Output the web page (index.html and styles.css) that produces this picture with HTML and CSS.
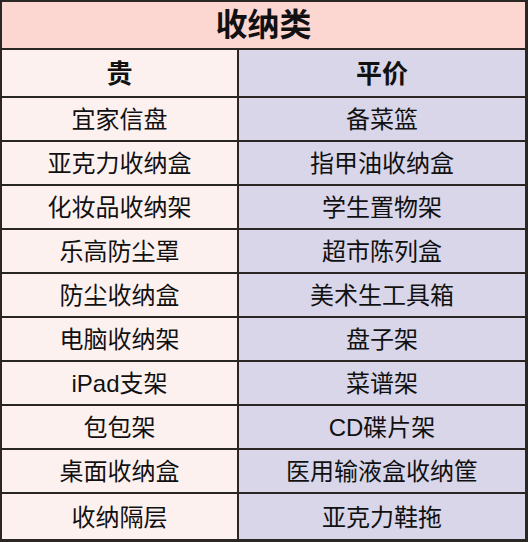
FILE: index.html
```html
<!DOCTYPE html>
<html lang="zh">
<head>
<meta charset="utf-8">
<title>收纳类</title>
<link rel="stylesheet" href="styles.css">
</head>
<body>
<div class="sheet">
  <div class="cell title">收纳类</div>
  <div class="cell head pricey">贵</div>
  <div class="cell head cheap">平价</div>
  <div class="cell pricey">宜家信盘</div>
  <div class="cell cheap">备菜篮</div>
  <div class="cell pricey">亚克力收纳盒</div>
  <div class="cell cheap">指甲油收纳盒</div>
  <div class="cell pricey">化妆品收纳架</div>
  <div class="cell cheap">学生置物架</div>
  <div class="cell pricey">乐高防尘罩</div>
  <div class="cell cheap">超市陈列盒</div>
  <div class="cell pricey">防尘收纳盒</div>
  <div class="cell cheap">美术生工具箱</div>
  <div class="cell pricey">电脑收纳架</div>
  <div class="cell cheap">盘子架</div>
  <div class="cell pricey">iPad支架</div>
  <div class="cell cheap">菜谱架</div>
  <div class="cell pricey">包包架</div>
  <div class="cell cheap">CD碟片架</div>
  <div class="cell pricey">桌面收纳盒</div>
  <div class="cell cheap">医用输液盒收纳筐</div>
  <div class="cell pricey">收纳隔层</div>
  <div class="cell cheap">亚克力鞋拖</div>
</div>
</body>
</html>
```
FILE: styles.css
```css
html, body {
  margin: 0;
  padding: 0;
  background: #ffffff;
}
.sheet {
  width: 528px;
  height: 542px;
  box-sizing: border-box;
  display: grid;
  grid-template-columns: 235px 286px;
  grid-template-rows: 46px 46px repeat(9, 42px) 45px;
  gap: 2px;
  padding: 2px 3px 3px 2px;
  background: #2a2624;
  font-family: "Liberation Sans", "Noto Sans CJK SC", sans-serif;
  color: #111111;
}
.cell {
  display: flex;
  align-items: center;
  justify-content: center;
  font-size: 24px;
  line-height: 1;
  padding-top: 2px;
  box-sizing: border-box;
}
.title {
  grid-column: 1 / span 2;
  background: #fcd6d1;
  font-size: 32px;
  font-weight: bold;
  padding-top: 0;
}
.head {
  font-size: 26px;
  font-weight: bold;
}
.pricey {
  background: #fdf1f0;
}
.cheap {
  background: #d9d6e9;
}
```
